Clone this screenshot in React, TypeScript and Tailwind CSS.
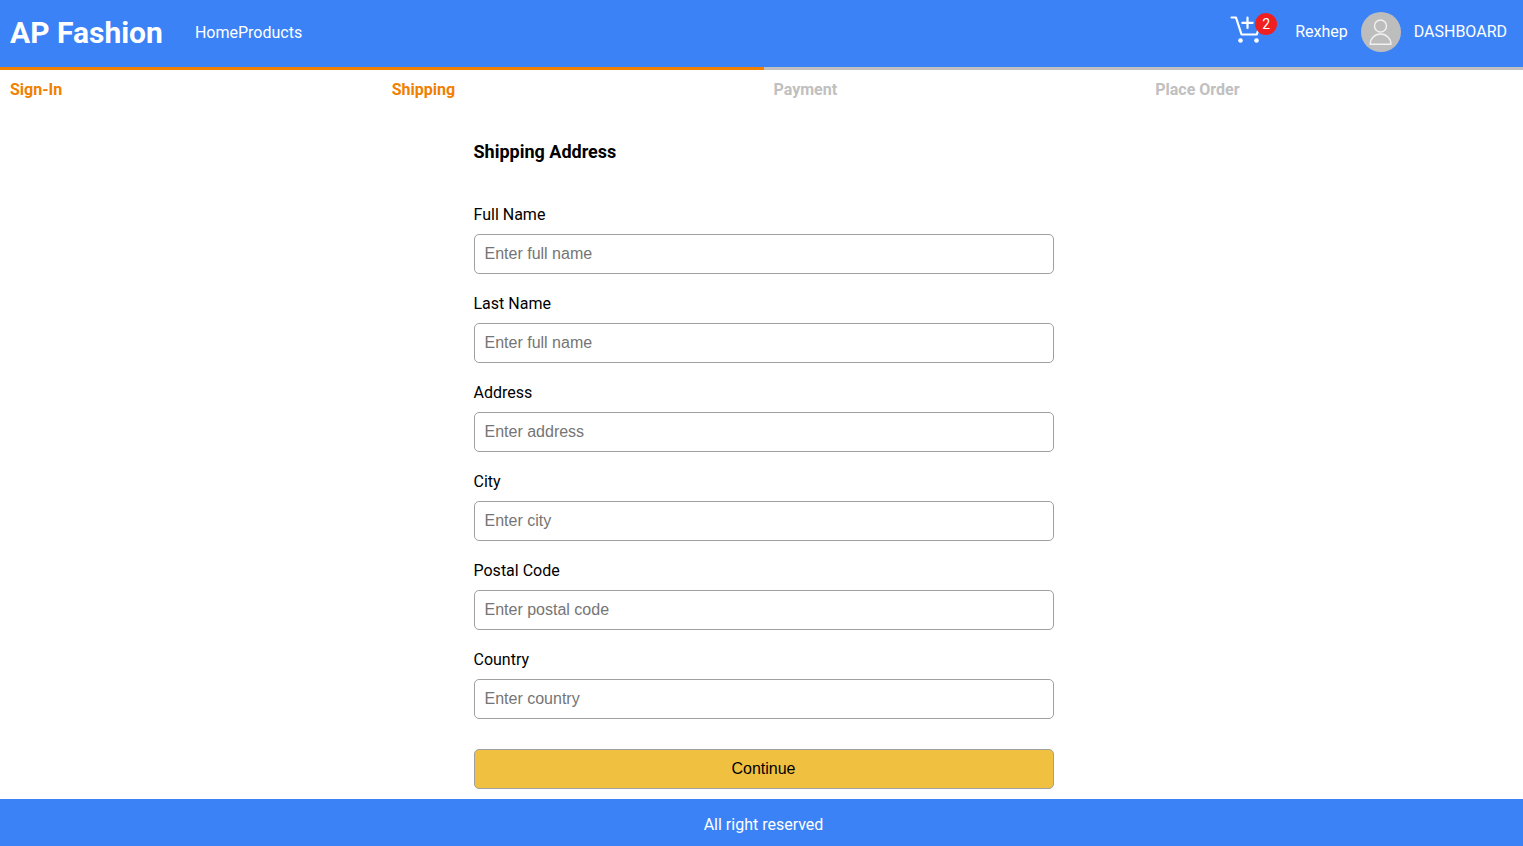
const steps = [
  { label: "Sign-In", active: true },
  { label: "Shipping", active: true },
  { label: "Payment", active: false },
  { label: "Place Order", active: false },
];

const fields = [
  { id: "fullName", label: "Full Name", placeholder: "Enter full name" },
  { id: "lastName", label: "Last Name", placeholder: "Enter full name" },
  { id: "address", label: "Address", placeholder: "Enter address" },
  { id: "city", label: "City", placeholder: "Enter city" },
  { id: "postalCode", label: "Postal Code", placeholder: "Enter postal code" },
  { id: "country", label: "Country", placeholder: "Enter country" },
];

function CartIcon() {
  return (
    <svg
      width="32"
      height="32"
      viewBox="0 0 32 32"
      fill="none"
      stroke="white"
      strokeWidth="2.2"
      strokeLinecap="round"
      strokeLinejoin="round"
      aria-hidden="true"
    >
      <path d="M2.5 4.5h4.5l5.5 17h15.3l2.2-7" />
      <path d="M18.5 4.5v10.5M13.3 9.8h10.4" />
      <circle cx="11.5" cy="27.5" r="2.3" fill="white" stroke="none" />
      <circle cx="27.5" cy="27.5" r="2.3" fill="white" stroke="none" />
    </svg>
  );
}

function Avatar() {
  return (
    <svg
      width="40"
      height="40"
      viewBox="0 0 40 40"
      fill="none"
      stroke="#f1f1f1"
      strokeWidth="1.4"
      strokeLinejoin="round"
      aria-hidden="true"
    >
      <circle cx="20" cy="20" r="20" fill="#bdbdbd" stroke="none" />
      <circle cx="19.5" cy="14" r="6" />
      <path d="M9.2 32.3C9.2 26.4 13.8 22 19.5 22s10.5 4.4 10.5 10.3z" />
    </svg>
  );
}

function Header() {
  return (
    <header className="flex h-[67px] items-center justify-between bg-[#3b82f6] pr-5 pb-[3px] pl-[10px] text-white">
      <div className="flex items-center gap-8 pt-0.5">
        <a href="#" className="text-[30px] leading-9 font-bold">
          AP Fashion
        </a>
        <nav className="flex">
          <a href="#">Home</a>
          <a href="#products">Products</a>
        </nav>
      </div>
      <div className="flex items-center gap-[13px]">
        <a href="#cart" aria-label="Cart, 2 items" className="relative mr-[21px] pb-[6px]">
          <CartIcon />
          <span className="absolute top-0 -right-4 flex size-[22px] items-center justify-center rounded-full bg-[#f02020] text-sm">
            2
          </span>
        </a>
        <a href="#profile">Rexhep</a>
        <Avatar />
        <a href="#dashboard">DASHBOARD</a>
      </div>
    </header>
  );
}

function CheckoutSteps() {
  return (
    <ol className="grid grid-cols-4 font-bold">
      {steps.map((step) => (
        <li
          key={step.label}
          className={
            step.active
              ? "border-t-[3px] border-[#f08000] px-[10px] pt-2 text-[#f08000]"
              : "border-t-[3px] border-[#c0c0c0] px-[10px] pt-2 text-[#c0c0c0]"
          }
        >
          {step.label}
        </li>
      ))}
    </ol>
  );
}

export default function App() {
  return (
    <div className="min-h-screen overflow-x-hidden bg-white font-['Roboto',sans-serif] text-base text-black">
      <div className="-mr-1 flex min-h-screen flex-col">
        <Header />
        <main className="grow">
          <CheckoutSteps />
          <form
            className="mx-auto w-full max-w-[580px] pt-9 pb-[10px]"
            onSubmit={(event) => event.preventDefault()}
          >
            <h1 className="mb-[37px] text-lg font-bold">Shipping Address</h1>
            <div className="flex flex-col gap-[18px]">
              {fields.map((field) => (
                <div key={field.id} className="flex flex-col gap-[7px]">
                  <label htmlFor={field.id}>{field.label}</label>
                  <input
                    id={field.id}
                    type="text"
                    placeholder={field.placeholder}
                    className="h-10 w-full rounded-[5px] border border-[#a0a0a0] bg-white px-[10px] font-['Liberation_Sans',Arial,sans-serif] placeholder:text-[#757575]"
                  />
                </div>
              ))}
            </div>
            <button
              type="submit"
              className="mt-[30px] h-10 w-full rounded-[5px] border border-[#a0a0a0] bg-[#f0c040] font-['Liberation_Sans',Arial,sans-serif]"
            >
              Continue
            </button>
          </form>
        </main>
        <footer className="flex h-[47px] items-center justify-center bg-[#3b82f6] pt-1 text-white">
          All right reserved
        </footer>
      </div>
    </div>
  );
}
